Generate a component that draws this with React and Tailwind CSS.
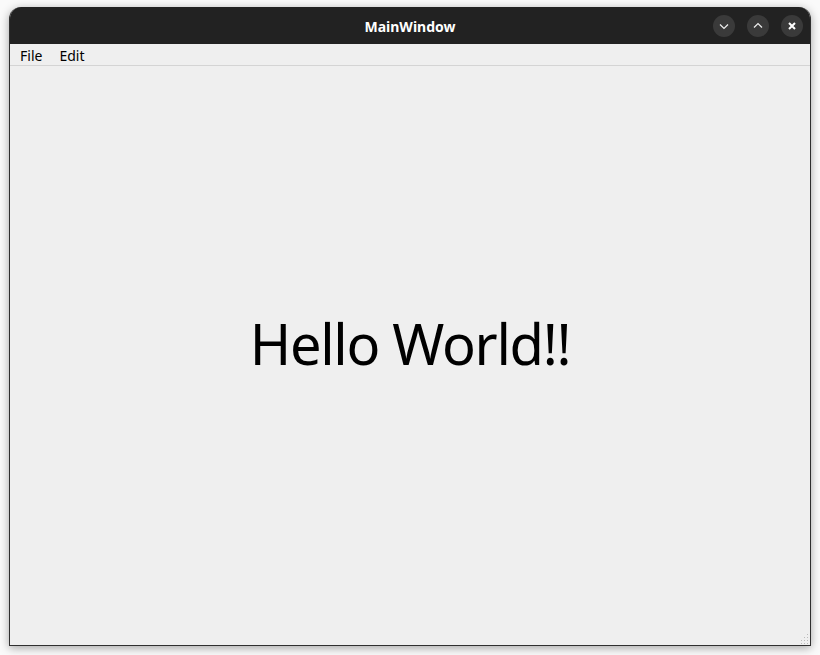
export default function App() {
  return (
    <div className="w-[820px] h-[655px] bg-[#fafafa] pt-[7px] pl-[9px] overflow-hidden" style={{ fontFamily: '"Noto Sans", "Open Sans", sans-serif' }}>
      {/* Window */}
      <div className="w-[802px] h-[639px] flex flex-col rounded-t-[12px] overflow-hidden shadow-[0_2px_10px_rgba(0,0,0,0.35)] border-x border-b border-[#303030] bg-[#efefef]">
        {/* Title bar */}
        <div className="h-[37px] bg-[#222222] flex items-center relative shrink-0 -mx-px">
          <div className="flex-1 text-center text-white text-[14px] font-bold pt-px" style={{ fontFamily: '"Noto Sans", sans-serif' }}>MainWindow</div>
          <div className="absolute right-[8px] top-[8px] flex gap-[12px]">
            <WinButton>
              <svg width="12" height="12" viewBox="0 0 12 12"><path d="M2 4.5 L6 8.5 L10 4.5" fill="none" stroke="#eee" strokeWidth="1.2" /></svg>
            </WinButton>
            <WinButton>
              <svg width="12" height="12" viewBox="0 0 12 12"><path d="M2 7.5 L6 3.5 L10 7.5" fill="none" stroke="#eee" strokeWidth="1.2" /></svg>
            </WinButton>
            <WinButton>
              <svg width="12" height="12" viewBox="0 0 12 12"><path d="M3 3 L9 9 M9 3 L3 9" fill="none" stroke="#fff" strokeWidth="2" /></svg>
            </WinButton>
          </div>
        </div>

        {/* Menu bar */}
        <div className="h-[22px] flex items-center border-b border-[#d4d4d4] text-[14px] text-black shrink-0 pl-[10px] gap-[17px] pt-[2px]">
          <span>File</span>
          <span>Edit</span>
        </div>

        {/* Content */}
        <div className="flex-1 flex items-center justify-center relative">
          <div className="text-[56px] text-black font-normal leading-none -mt-[26px] tracking-[-1.3px]">Hello World!!</div>
          <svg className="absolute right-[1px] bottom-[1px]" width="10" height="10" viewBox="0 0 10 10">
            {[[8, 0], [8, 3], [5, 3], [8, 6], [5, 6], [2, 6], [8, 9], [5, 9], [2, 9], [-1, 9]].map(([x, y], i) => (
              <rect key={i} x={x} y={y} width="1" height="1" fill="#bbb" />
            ))}
          </svg>
        </div>
      </div>
    </div>
  )
}

function WinButton({ children }) {
  return (
    <div className="w-[22px] h-[22px] rounded-full bg-[#3a3a3a] flex items-center justify-center">
      {children}
    </div>
  )
}
